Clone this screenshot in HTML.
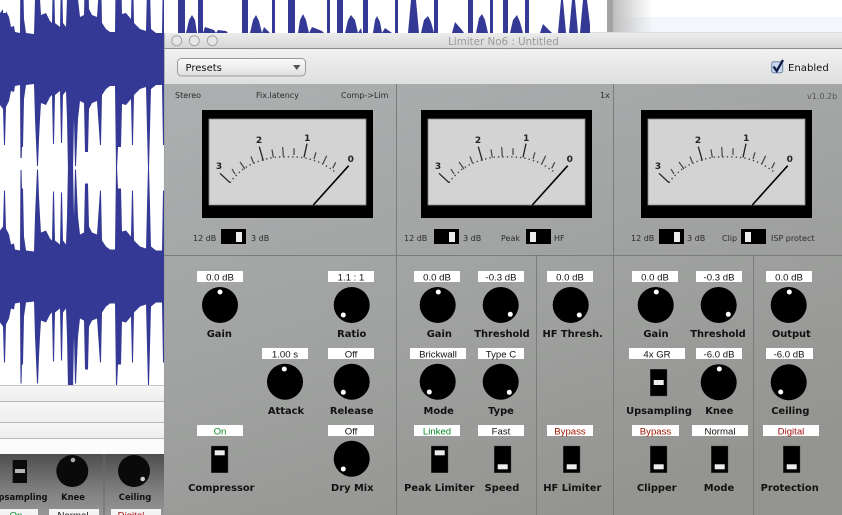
<!DOCTYPE html>
<html>
<head>
<meta charset="utf-8">
<title>Limiter No6</title>
<style>
html,body{margin:0;padding:0;background:#fff;width:842px;height:515px;overflow:hidden}
svg{display:block;position:absolute;left:0;top:0}
.s{font-family:"DejaVu Sans",sans-serif;font-size:8px;fill:#2c2c2c}
.v{font-family:"Liberation Sans",sans-serif;font-size:9.6px;fill:#111;text-anchor:middle}
.l{font-family:"DejaVu Sans",sans-serif;font-weight:bold;font-size:9.9px;fill:#111;text-anchor:middle}
.p{font-family:"DejaVu Sans",sans-serif;font-weight:bold;font-size:8.4px;fill:#111;text-anchor:middle}
.n{font-family:"DejaVu Sans",sans-serif;font-weight:bold;font-size:9px;fill:#222;text-anchor:middle}
.b{fill:#fff}
</style>
</head>
<body>
<svg width="842" height="515" viewBox="0 0 842 515" xmlns="http://www.w3.org/2000/svg">
<defs>
<linearGradient id="panel" x1="0.1" y1="0" x2="0.6" y2="1"><stop offset="0" stop-color="#abafaf"/><stop offset="0.55" stop-color="#a0a2a1"/><stop offset="1" stop-color="#949491"/></linearGradient>
<linearGradient id="title" x1="0" y1="0" x2="0" y2="1"><stop offset="0" stop-color="#ececec"/><stop offset="1" stop-color="#d6d6d6"/></linearGradient>
<linearGradient id="tool" x1="0" y1="0" x2="0" y2="1"><stop offset="0" stop-color="#f1f1f1"/><stop offset="1" stop-color="#dfdfdf"/></linearGradient>
<linearGradient id="btn" x1="0" y1="0" x2="0" y2="1"><stop offset="0" stop-color="#fbfbfb"/><stop offset="0.5" stop-color="#eeeeee"/><stop offset="1" stop-color="#dedede"/></linearGradient>
<linearGradient id="dark" x1="0" y1="0" x2="0" y2="1"><stop offset="0" stop-color="#4e4e4e"/><stop offset="0.6" stop-color="#7f7f7f"/><stop offset="1" stop-color="#969696"/></linearGradient>
<linearGradient id="side" x1="0" y1="0" x2="1" y2="0"><stop offset="0" stop-color="#bdbdbd"/><stop offset="1" stop-color="#c8c8c8" stop-opacity="0"/></linearGradient>
<linearGradient id="row" x1="0" y1="0" x2="0" y2="1"><stop offset="0" stop-color="#f7f7f7"/><stop offset="1" stop-color="#eeeeee"/></linearGradient>
<clipPath id="wclip"><rect x="0" y="0" width="164" height="385"/></clipPath>
<path id="wh" d="M0,0 L0,-46 3,-50 4,-86 5,-86 6,-48 9,-42 11,-32 14,-33 15,-27 20,-26 20.5,-107 21.5,-107 22,-88 23,-88 24,-40 26,-26 34,-25 35,-60 37,-107 38,-107 39,-80 40,-60 41,-44 46,-46 50,-38 52,-36 53,-85 54,-85 55,-36 60,-32 61,-84 62,-84 63,-36 66,-32 67,-60 68,-112 73,-112 74,-60 75,-107 76,-107 78,-60 80,-42 84,-44 85,-93 88,-93 89,-50 92,-44 97,-42 100,-86 101,-86 102,-36 106,-30 110,-27 115,-27 116,-110 117,-110 118,-88 121,-88 122,-45 126,-46 131,-40 132,-86 133,-86 134,-36 140,-30 146,-28 147,-70 148,-110 149,-110 150,-70 151,-30 156,-26 162,-26 163,-86 164,-86 164,0 Z"/>
<g id="wave"><use href="#wh"/><use href="#wh" transform="scale(1,-1)"/></g>
<g id="meter">
<rect x="0" y="0" width="171" height="108" fill="#000"/>
<rect x="7" y="9" width="157" height="86" fill="#d3d3d3" stroke="#8a8a8a" stroke-width="0.8"/>
<g stroke="#222" stroke-width="1.3" fill="none">
<path d="M18,63.3 L28,72.7 M57.3,36.7 L61.3,50.7 M105,33.7 L102,47.3"/>
</g>
<g stroke="#444" stroke-width="1.2" fill="none">
<path d="M30,59 L33,64 M38,52 L43,59 M49,46.5 L51.5,53 M70,39.5 L71.3,47.5 M80.7,37 L81.3,46.7 M92,38.3 L92,45 M114,42.3 L112,49 M124.7,45.7 L120.7,54 M133.7,52.3 L130.7,58.3"/>
</g>
<path d="M28,72.7 C34,64 42,58 48,55 C56,51 66,48 73,47.3 C80,46.7 90,46.7 98,47.3 C106,48 115,51 121.3,54.3 C126,57 131,60 134.7,63.3" stroke="#444" stroke-width="1.4" stroke-dasharray="1.4 3" fill="none"/>
<path d="M111.3,95 L146.7,55.7" stroke="#000" stroke-width="1.6" fill="none"/>
</g>
<path id="hsw" d="M0,0 h25 v15 h-25 z" fill="#000"/>
<g id="sw"><rect x="0" y="0" width="16.7" height="26.7" fill="#000" stroke="#444" stroke-width="0.4"/></g>
</defs>

<!-- desktop behind -->
<rect width="842" height="515" fill="#fff"/>
<g clip-path="url(#wclip)" fill="#343995">
<use href="#wave" transform="translate(0,59)"/>
<use href="#wave" transform="translate(0,276.5)"/>
</g>
<rect x="3" y="0" width="3" height="13" fill="#fff"/>
<rect x="19.5" y="158" width="3" height="12" fill="#fff"/>

<path fill="#343995" d="M178,0H185V33H178Z M186,33L189,20 192,15 195,20 197,33Z M198,0H203V33H198Z M203,33L205,27 214,30 216,33Z M216,33L218,30 226,31 228,33Z
M242,0H248V33H242Z M250,33L253,20 256,15 259,21 262,33Z M262,33L264,27 270,33Z M272,0H275V33H272Z M288,0H295V33H288Z M298,33L300,20 303,14 306,20 309,33Z M309,33L312,27 322,31 324,33Z
M327,0H330V33H327Z M337,0H343V33H337Z M345,33L348,20 351,15 355,20 358,33Z M358,33L361,28 362,33Z M363,0H368V33H363Z M373,33L375,20 377,16 380,22 382,33Z M382,33L385,28 392,33Z
M395,0H398V33H395Z M408,33L411,0H416L419,33Z M421,33L424,20 428,16 431,22 434,33Z M434,0H438V33H434Z M452,33L455,22 462,30 464,33Z M468,0H473V33H468Z M476,33L479,18 482,14 485,20 488,33Z M490,0H493V33H490Z M503,0H508V33H503Z M510,33L513,20 517,15 520,22 523,33Z M525,0H529V33H525Z M540,33L543,24 552,33Z M558,33L561,0H563L566,33Z M569,33L572,0H575L578,33Z M580,33L583,0H587L591,33Z"/>

<rect x="590" y="0" width="17" height="33" fill="#fff"/>
<rect x="613" y="17" width="229" height="16" fill="#f3f6fa"/>
<rect x="613" y="0" width="40" height="33" fill="url(#side)"/>
<rect x="607" y="0" width="6" height="33" fill="#a3a3a3"/>
<rect x="590" y="32" width="252" height="1" fill="#ddd"/>

<!-- lower-left tracks -->
<rect x="0" y="385" width="164" height="16" fill="url(#row)"/>
<rect x="0" y="385" width="164" height="1" fill="#c9c9c9"/>
<rect x="0" y="401" width="164" height="21.5" fill="url(#row)"/>
<rect x="0" y="401" width="164" height="1" fill="#b9b9b9"/>
<rect x="0" y="422.5" width="164" height="16" fill="url(#row)"/>
<rect x="0" y="422" width="164" height="1" fill="#b9b9b9"/>
<rect x="0" y="438.5" width="164" height="16" fill="#fbfbfb"/>
<rect x="0" y="438" width="164" height="1" fill="#b9b9b9"/>

<!-- plugin behind -->
<rect x="0" y="454" width="164" height="61" fill="url(#dark)"/>
<rect x="103.5" y="454" width="1" height="61" fill="#6a6a6a"/>
<rect x="12.7" y="460" width="14.3" height="23" fill="#0a0a0a"/>
<rect x="15" y="469" width="10" height="4" fill="#b5b5b5"/>
<circle cx="72.3" cy="471" r="16" fill="#0a0a0a"/>
<circle cx="73" cy="460" r="2.3" fill="#aaa"/>
<circle cx="134" cy="471" r="16" fill="#0a0a0a"/>
<circle cx="142.7" cy="479" r="2.3" fill="#ccc"/>
<text class="p" x="19.6" y="500">Upsampling</text>
<text class="p" x="73" y="500">Knee</text>
<text class="p" x="135" y="500">Ceiling</text>
<rect x="-10" y="509" width="48" height="8" fill="#f4f4f4"/>
<rect x="49" y="509" width="50" height="8" fill="#f4f4f4"/>
<rect x="111" y="509" width="50" height="8" fill="#f4f4f4"/>
<text class="v" x="16" y="518.5" style="fill:#0a8a2a">On</text>
<text class="v" x="73" y="518.5">Normal</text>
<text class="v" x="131" y="518.5" style="fill:#a01010">Digital</text>

<!-- window -->
<rect x="164" y="84" width="678" height="431" fill="url(#panel)"/>
<rect x="164" y="33" width="678" height="15.5" fill="url(#title)"/>
<rect x="164" y="48" width="678" height="1" fill="#8e8e8e"/>
<rect x="164" y="49" width="678" height="35" fill="url(#tool)"/>
<rect x="164" y="33" width="1" height="482" fill="#9c9c9c" opacity="0.7"/>
<g fill="#e6e6e6" stroke="#a6a6a6" stroke-width="1">
<circle cx="176.7" cy="40.7" r="5"/><circle cx="194.3" cy="40.7" r="5"/><circle cx="212.3" cy="40.7" r="5"/>
</g>
<text x="503.5" y="45" text-anchor="middle" style="font-family:'DejaVu Sans',sans-serif;font-size:10.3px;fill:#9a9a9a">Limiter No6 : Untitled</text>

<rect x="177.5" y="58.5" width="128" height="17.5" rx="4" fill="url(#btn)" stroke="#9a9a9a"/>
<text x="185.5" y="71" style="font-family:'DejaVu Sans',sans-serif;font-size:10px;fill:#111">Presets</text>
<path d="M293,65 h7.5 l-3.75,5 z" fill="#555"/>

<rect x="771.7" y="61.7" width="11" height="11" rx="2" fill="#c9d9ef" stroke="#6f83a8"/>
<path d="M773.5,66.5 L776.7,71 L783,60" stroke="#0e1c46" stroke-width="2.3" fill="none"/>
<text x="788" y="71" style="font-family:'DejaVu Sans',sans-serif;font-size:10.1px;fill:#111">Enabled</text>

<!-- dividers -->
<g fill="#7b7c7c">
<rect x="396" y="84" width="1" height="431"/>
<rect x="613" y="84" width="1" height="431"/>
<rect x="164" y="255" width="678" height="1"/>
<rect x="536" y="255" width="1" height="260"/>
<rect x="753" y="255" width="1" height="260"/>
</g>

<text class="s" x="175" y="98">Stereo</text>
<text class="s" x="256" y="98">Fix.latency</text>
<text class="s" x="341" y="98">Comp-&gt;Lim</text>
<text class="s" x="600" y="98">1x</text>
<text class="s" x="807" y="99" style="fill:#555">v1.0.2b</text>

<!-- meters -->
<use href="#meter" x="202" y="110"/>
<text class="n" x="219" y="169">3</text><text class="n" x="259" y="143">2</text><text class="n" x="307.3" y="141">1</text><text class="n" x="350.7" y="162">0</text>
<use href="#meter" x="421" y="110"/>
<text class="n" x="438" y="169">3</text><text class="n" x="478" y="143">2</text><text class="n" x="526.3" y="141">1</text><text class="n" x="569.7" y="162">0</text>
<use href="#meter" x="641" y="110"/>
<text class="n" x="658" y="169">3</text><text class="n" x="698" y="143">2</text><text class="n" x="746.3" y="141">1</text><text class="n" x="789.7" y="162">0</text>

<!-- meter switches -->
<text class="s" x="193" y="241">12 dB</text><use href="#hsw" x="221" y="229"/><rect x="236" y="232" width="6" height="10" fill="#ececec"/><text class="s" x="251" y="241">3 dB</text>
<text class="s" x="404" y="241">12 dB</text><use href="#hsw" x="434" y="229"/><rect x="449" y="232" width="6" height="10" fill="#ececec"/><text class="s" x="463" y="241">3 dB</text>
<text class="s" x="501" y="241">Peak</text><use href="#hsw" x="526" y="229"/><rect x="530" y="232" width="6" height="10" fill="#ececec"/><text class="s" x="554" y="241">HF</text>
<text class="s" x="631" y="241">12 dB</text><use href="#hsw" x="659" y="229"/><rect x="674" y="232" width="6" height="10" fill="#ececec"/><text class="s" x="687" y="241">3 dB</text>
<text class="s" x="722" y="241">Clip</text><use href="#hsw" x="741" y="229"/><rect x="745" y="232" width="6" height="10" fill="#ececec"/><text class="s" x="771" y="241">ISP protect</text>

<!-- value boxes -->
<g class="b">
<rect x="197" y="271" width="46" height="11"/><rect x="328" y="271" width="46" height="11"/>
<rect x="262" y="348" width="46" height="11"/><rect x="328" y="348" width="46" height="11"/>
<rect x="197" y="425" width="46" height="11"/><rect x="328" y="425" width="46" height="11"/>
<rect x="414" y="271" width="46" height="11"/><rect x="478" y="271" width="46" height="11"/><rect x="547" y="271" width="46" height="11"/>
<rect x="410" y="348" width="56" height="11"/><rect x="478" y="348" width="46" height="11"/>
<rect x="414" y="425" width="46" height="11"/><rect x="478" y="425" width="46" height="11"/><rect x="547" y="425" width="46" height="11"/>
<rect x="632" y="271" width="46" height="11"/><rect x="696" y="271" width="46" height="11"/><rect x="766" y="271" width="46" height="11"/>
<rect x="629" y="348" width="56" height="11"/><rect x="696" y="348" width="46" height="11"/><rect x="766" y="348" width="47" height="11"/>
<rect x="632" y="425" width="47" height="11"/><rect x="692" y="425" width="56" height="11"/><rect x="763" y="425" width="56" height="11"/>
</g>
<text class="v" x="220" y="280.5">0.0 dB</text><text class="v" x="351" y="280.5">1.1 : 1</text>
<text class="v" x="285" y="357.5">1.00 s</text><text class="v" x="351" y="357.5">Off</text>
<text class="v" x="220" y="434.5" style="fill:#0a8a2a">On</text><text class="v" x="351" y="434.5">Off</text>
<text class="v" x="437" y="280.5">0.0 dB</text><text class="v" x="501" y="280.5">-0.3 dB</text><text class="v" x="570" y="280.5">0.0 dB</text>
<text class="v" x="438" y="357.5">Brickwall</text><text class="v" x="501" y="357.5">Type C</text>
<text class="v" x="437" y="434.5" style="fill:#0a8a2a">Linked</text><text class="v" x="501" y="434.5">Fast</text><text class="v" x="570" y="434.5" style="fill:#a01800">Bypass</text>
<text class="v" x="655" y="280.5">0.0 dB</text><text class="v" x="719" y="280.5">-0.3 dB</text><text class="v" x="789" y="280.5">0.0 dB</text>
<text class="v" x="657" y="357.5">4x GR</text><text class="v" x="719" y="357.5">-6.0 dB</text><text class="v" x="789" y="357.5">-6.0 dB</text>
<text class="v" x="655.5" y="434.5" style="fill:#a01800">Bypass</text><text class="v" x="720" y="434.5">Normal</text><text class="v" x="791" y="434.5" style="fill:#a01010">Digital</text>

<!-- knobs -->
<g fill="#000">
<circle cx="220" cy="305" r="18"/><circle cx="351.7" cy="305" r="18"/><circle cx="285" cy="381.7" r="18"/><circle cx="351.7" cy="381.7" r="18"/><circle cx="351.7" cy="458.7" r="18"/>
<circle cx="437.7" cy="305" r="18"/><circle cx="500.7" cy="305" r="18"/><circle cx="570.7" cy="305" r="18"/><circle cx="437.7" cy="381.7" r="18"/><circle cx="500.7" cy="381.7" r="18"/>
<circle cx="655.7" cy="305" r="18"/><circle cx="718.7" cy="305" r="18"/><circle cx="788.7" cy="305" r="18"/><circle cx="718.7" cy="382.3" r="18"/><circle cx="788.7" cy="382.3" r="18"/>
</g>
<g fill="#fff">
<circle cx="220" cy="292" r="2.5"/><circle cx="343.3" cy="315" r="2.5"/><circle cx="284.3" cy="369" r="2.5"/><circle cx="343.3" cy="392.3" r="2.5"/><circle cx="343.3" cy="469" r="2.5"/>
<circle cx="438.3" cy="292" r="2.5"/><circle cx="510.3" cy="314.3" r="2.5"/><circle cx="579.3" cy="315" r="2.5"/><circle cx="429.3" cy="392" r="2.5"/><circle cx="509.3" cy="392.3" r="2.5"/>
<circle cx="656.3" cy="292" r="2.5"/><circle cx="728.3" cy="314.3" r="2.5"/><circle cx="789.3" cy="292" r="2.5"/><circle cx="719.3" cy="369" r="2.5"/><circle cx="780.7" cy="392" r="2.5"/>
</g>

<!-- vertical switches -->
<use href="#sw" x="211.3" y="446"/><rect x="214.7" y="450.3" width="10" height="5" fill="#ececec"/>
<use href="#sw" x="431.3" y="446"/><rect x="434.7" y="450.3" width="10" height="5" fill="#ececec"/>
<use href="#sw" x="494.3" y="446"/><rect x="497.7" y="464.3" width="10" height="5" fill="#ececec"/>
<use href="#sw" x="563.3" y="446"/><rect x="566.7" y="464.3" width="10" height="5" fill="#ececec"/>
<use href="#sw" x="650.3" y="369.3"/><rect x="653.7" y="380" width="10" height="5" fill="#ececec"/>
<use href="#sw" x="650.3" y="446"/><rect x="653.7" y="464.3" width="10" height="5" fill="#ececec"/>
<use href="#sw" x="711.3" y="446"/><rect x="714.7" y="464.3" width="10" height="5" fill="#ececec"/>
<use href="#sw" x="783.3" y="446"/><rect x="786.7" y="464.3" width="10" height="5" fill="#ececec"/>

<!-- labels -->
<text class="l" x="219.3" y="337">Gain</text><text class="l" x="351.7" y="337">Ratio</text>
<text class="l" x="286" y="414">Attack</text><text class="l" x="351.7" y="414">Release</text>
<text class="l" x="221.3" y="491">Compressor</text><text class="l" x="352.3" y="491">Dry Mix</text>
<text class="l" x="439.3" y="337">Gain</text><text class="l" x="502" y="337">Threshold</text><text class="l" x="572.7" y="337">HF Thresh.</text>
<text class="l" x="438.7" y="414">Mode</text><text class="l" x="501" y="414">Type</text>
<text class="l" x="439.3" y="491">Peak Limiter</text><text class="l" x="502" y="491">Speed</text><text class="l" x="572.3" y="491">HF Limiter</text>
<text class="l" x="656" y="337">Gain</text><text class="l" x="718" y="337">Threshold</text><text class="l" x="791.3" y="337">Output</text>
<text class="l" x="659" y="414">Upsampling</text><text class="l" x="719.3" y="414">Knee</text><text class="l" x="790.3" y="414">Ceiling</text>
<text class="l" x="656.7" y="491">Clipper</text><text class="l" x="719" y="491">Mode</text><text class="l" x="789.7" y="491">Protection</text>
</svg>
</body>
</html>
